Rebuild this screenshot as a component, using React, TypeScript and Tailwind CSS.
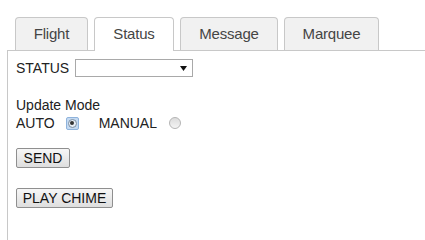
import React from "react";

const tabs = [
  { label: "Flight", w: "w-[73px]", active: false },
  { label: "Status", w: "w-[80px]", active: true },
  { label: "Message", w: "w-[98px]", active: false },
  { label: "Marquee", w: "w-[95px]", active: false },
];

export default function App() {
  return (
    <div className="w-[425px] h-[240px] bg-white overflow-hidden font-['Liberation_Sans',Arial,sans-serif] text-[#222]">
      <div className="pt-[17px]">
        <div className="flex items-end gap-[6px] pl-[15px] h-[33px]">
          {tabs.map((t) =>
            t.active ? (
              <div
                key={t.label}
                className={`${t.w} h-[34px] -mb-px relative z-10 bg-white border border-b-0 border-[#c8c8c8] rounded-t-[4px] flex items-center justify-center text-[15px] tracking-[-0.2px] text-[#454545]`}
              >
                {t.label}
              </div>
            ) : (
              <div
                key={t.label}
                className={`${t.w} h-[33px] bg-[#f1f1f1] border border-b-0 border-[#c8c8c8] rounded-t-[4px] flex items-center justify-center text-[15px] tracking-[-0.2px] text-[#454545]`}
              >
                {t.label}
              </div>
            )
          )}
        </div>
        <div className="ml-[7px] h-[190px] border-l border-t border-[#c8c8c8] pl-[8px] pt-[8px] text-[14px]">
          <div className="flex items-center h-[18px] gap-[6px]">
            <span className="leading-[16px]">STATUS</span>
            <div className="w-[118px] h-[18px] border border-[#a9a9a9] bg-white flex items-center justify-end pr-[5px]">
              <svg width="7" height="5" viewBox="0 0 7 5">
                <polygon points="0,0 7,0 3.5,5" fill="#111" />
              </svg>
            </div>
          </div>
          <div className="mt-[19px] leading-[18px]">Update Mode</div>
          <div className="flex items-center h-[18px] leading-[18px]">
            <span>AUTO</span>
            <div className="ml-[11px] w-[13px] h-[13px] rounded-[2px] bg-[#c4daf2] border border-[#8fb3dc] flex items-center justify-center">
              <div className="w-[9px] h-[9px] rounded-full bg-[#e8eef5] border border-[#7d8fa3] flex items-center justify-center">
                <div className="w-[4px] h-[4px] rounded-full bg-[#333]" />
              </div>
            </div>
            <span className="ml-[20px]">MANUAL</span>
            <div className="ml-[12px] w-[12px] h-[12px] rounded-full border border-[#b4b4b4] bg-gradient-to-b from-[#dcdcdc] to-[#f4f4f4]" />
          </div>
          <div className="mt-[16px]">
            <button className="h-[20px] w-[54px] border border-[#8f8f8f] rounded-[2px] bg-gradient-to-b from-[#f7f7f7] to-[#dedede] text-[14px] text-[#111] leading-[18px] font-['Liberation_Sans',Arial,sans-serif]">
              SEND
            </button>
          </div>
          <div className="mt-[19px]">
            <button className="h-[20px] w-[97px] border border-[#8f8f8f] rounded-[2px] bg-gradient-to-b from-[#f7f7f7] to-[#dedede] text-[14px] text-[#111] leading-[18px] font-['Liberation_Sans',Arial,sans-serif]">
              PLAY CHIME
            </button>
          </div>
        </div>
      </div>
    </div>
  );
}
